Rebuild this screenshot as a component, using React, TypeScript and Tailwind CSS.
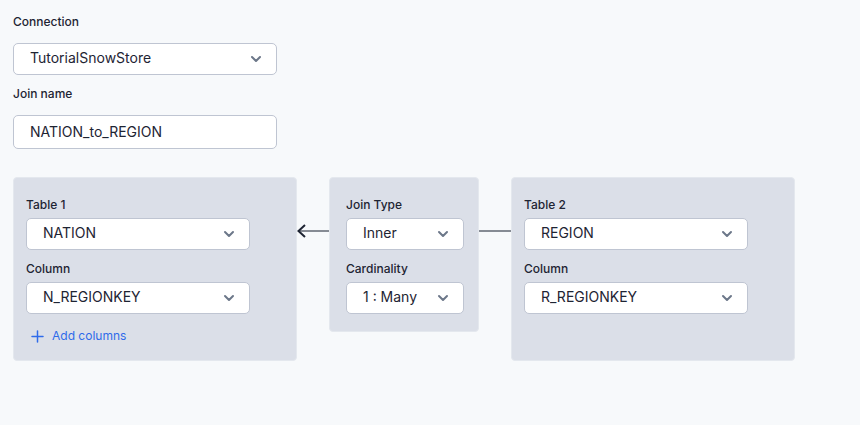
import { useId, type ReactNode } from "react";

const labelClass = "text-xs leading-4 font-medium text-[#1e2433]";

function Chevron() {
  return (
    <svg
      className="pointer-events-none absolute top-3 right-[15px] h-2 w-3"
      viewBox="0 0 12 8"
      fill="none"
      stroke="#6c7789"
      strokeWidth="2"
      strokeLinecap="round"
      strokeLinejoin="round"
      aria-hidden="true"
    >
      <path d="M2 2 6 6 10 2" />
    </svg>
  );
}

type SelectFieldProps = { label: string; options: string[]; spacing?: string };

function SelectField({ label, options, spacing = "gap-[5px]" }: SelectFieldProps) {
  const id = useId();
  return (
    <div className={`flex flex-col ${spacing}`}>
      <label htmlFor={id} className={labelClass}>
        {label}
      </label>
      <div className="relative">
        <select
          id={id}
          className="block h-8 w-full appearance-none rounded-[5px] border border-[#bfc5d2] bg-white pr-8 pb-0.5 pl-4 text-sm text-[#1e2433]"
        >
          {options.map((option) => (
            <option key={option}>{option}</option>
          ))}
        </select>
        <Chevron />
      </div>
    </div>
  );
}

function Panel({ className, children }: { className: string; children: ReactNode }) {
  return (
    <section className={`min-w-0 rounded border border-[#e4e8ee] bg-[#dbdfe8] pt-[19px] ${className}`}>
      {children}
    </section>
  );
}

function Connector({ arrow = false }: { arrow?: boolean }) {
  return (
    <div className="mt-[46px] flex h-4 w-8 shrink-0 items-center self-start" aria-hidden="true">
      {arrow && (
        <svg
          className="h-4 w-[9px] shrink-0"
          viewBox="0 0 9 16"
          fill="none"
          stroke="#1e2433"
          strokeWidth="2"
        >
          <path d="M1 8H9" stroke="#868b94" />
          <path d="M8 2 1.5 8 8 14" />
        </svg>
      )}
      <div className="h-0.5 flex-1 bg-[#868b94]" />
    </div>
  );
}

export default function App() {
  return (
    <main className="min-h-screen bg-[#f7f9fb] px-[13px] pt-[14px] pb-8 font-['Inter','Liberation_Sans',sans-serif] text-[#1e2433]">
      <form onSubmit={(event) => event.preventDefault()}>
        <div className="flex max-w-[264px] flex-col gap-[11px]">
          <SelectField label="Connection" options={["TutorialSnowStore"]} spacing="gap-[13px]" />
          <div className="flex flex-col gap-[13px]">
            <label htmlFor="join-name" className={labelClass}>
              Join name
            </label>
            <input
              id="join-name"
              type="text"
              defaultValue="NATION_to_REGION"
              className="h-[34px] w-full rounded-[5px] border border-[#bfc5d2] bg-white px-4 pb-0.5 text-sm text-[#1e2433]"
            />
          </div>
        </div>

        <div className="mt-7 flex">
          <Panel className="max-w-[284px] flex-1 px-3 pb-[14px]">
            <div className="flex max-w-[224px] flex-col gap-[11px]">
              <SelectField label="Table 1" options={["NATION"]} />
              <SelectField label="Column" options={["N_REGIONKEY"]} />
            </div>
            <button
              type="button"
              className="mt-3 ml-[5px] flex items-center gap-2 text-xs leading-5 text-[#2f6bea]"
            >
              <svg
                className="size-[13px]"
                viewBox="0 0 13 13"
                stroke="currentColor"
                strokeWidth="1.5"
                strokeLinecap="round"
                aria-hidden="true"
              >
                <path d="M6.5 1v11M1 6.5h11" />
              </svg>
              Add columns
            </button>
          </Panel>

          <Connector arrow />

          <Panel className="w-[150px] shrink-0 self-start pr-[14px] pb-[17px] pl-4">
            <div className="flex flex-col gap-[11px]">
              <SelectField label="Join Type" options={["Inner", "Left outer", "Right outer", "Outer"]} />
              <SelectField label="Cardinality" options={["1 : Many", "1 : 1", "Many : 1"]} />
            </div>
          </Panel>

          <Connector />

          <Panel className="max-w-[284px] flex-1 px-3 pb-[14px]">
            <div className="flex max-w-[224px] flex-col gap-[11px]">
              <SelectField label="Table 2" options={["REGION"]} />
              <SelectField label="Column" options={["R_REGIONKEY"]} />
            </div>
          </Panel>
        </div>
      </form>
    </main>
  );
}
